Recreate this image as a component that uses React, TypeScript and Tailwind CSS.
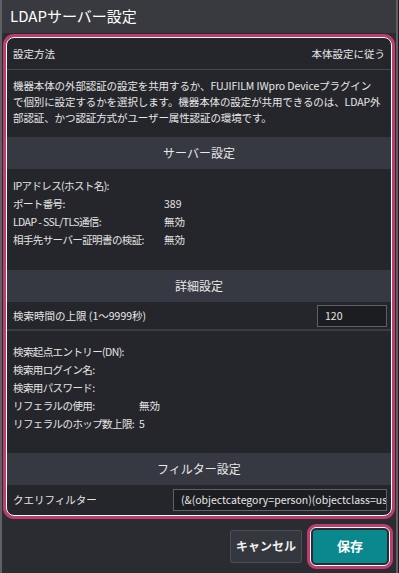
import React from "react";

const font = { fontFamily: '"Noto Sans CJK JP", "Noto Sans", sans-serif' };

function SectionHeader({ label }: { label: string }) {
  return (
    <div className="flex h-[32px] items-center justify-center bg-[#363941] text-[12px] text-[#e8e8e8]">
      {label}
    </div>
  );
}

function InfoRows({ rows, valueCol }: { rows: [string, string][]; valueCol: string }) {
  return (
    <div className="flex flex-col">
      {rows.map(([label, value]) => (
        <div key={label} className="flex h-[18px] items-center whitespace-nowrap text-[10.5px] text-[#e4e4e4]">
          <span className={`${valueCol} tracking-[-0.6px]`}>{label}</span>
          <span>{value}</span>
        </div>
      ))}
    </div>
  );
}

export default function App() {
  return (
    <div className="h-[573px] w-[399px] bg-[#1b1c1f]" style={font}>
      <div className="flex h-full w-[398px] flex-col border-x-2 border-[#5f6166] bg-[#2a2c31]">
        <div className="flex h-[33px] shrink-0 items-center bg-[#383a40] px-[8px] text-[15px] text-white">
          LDAPサーバー設定
        </div>

        <div className="mx-[1px] mt-[1px] rounded-[11px] border-[3px] border-[#c03c6e]">
          <div className="overflow-hidden rounded-[8px] border border-white bg-[#25262b]">
            <div className="flex h-[32px] items-center justify-between border-b border-[#43464d] px-[6px] text-[10.5px] text-[#e6e6e6]">
              <span>設定方法</span>
              <span>本体設定に従う</span>
            </div>

            <div className="whitespace-nowrap px-[6px] pb-[11px] pt-[8px] text-[10.5px] leading-[16px] tracking-[-0.1px] text-[#e6e6e6]">
              機器本体の外部認証の設定を共用するか、FUJIFILM IWpro Deviceプラグイン
              <br />
              で個別に設定するかを選択します。機器本体の設定が共用できるのは、LDAP外
              <br />
              部認証、かつ認証方式がユーザー属性認証の環境です。
            </div>

            <SectionHeader label="サーバー設定" />
            <div className="px-[6px] pb-[21px] pt-[8px]">
              <InfoRows
                valueCol="w-[151px]"
                rows={[
                  ["IPアドレス(ホスト名):", ""],
                  ["ポート番号:", "389"],
                  ["LDAP - SSL/TLS通信:", "無効"],
                  ["相手先サーバー証明書の検証:", "無効"],
                ]}
              />
            </div>

            <SectionHeader label="詳細設定" />
            <div className="flex h-[29px] items-center justify-between border-b-2 border-[#393c43] pl-[6px] pr-[4px] text-[10.5px] text-[#e6e6e6]">
              <span>検索時間の上限 (1～9999秒)</span>
              <div className="flex h-[22px] w-[70px] items-center border border-[#5d6068] bg-[#1c1d21] px-[7px]">
                120
              </div>
            </div>
            <div className="px-[6px] pb-[20px] pt-[12px]">
              <InfoRows
                valueCol="w-[126px]"
                rows={[
                  ["検索起点エントリー(DN):", ""],
                  ["検索用ログイン名:", ""],
                  ["検索用パスワード:", ""],
                  ["リフェラルの使用:", "無効"],
                  ["リフェラルのホップ数上限:", "5"],
                ]}
              />
            </div>

            <SectionHeader label="フィルター設定" />
            <div className="flex h-[30px] items-center justify-between pl-[6px] pr-[4px] text-[10.5px] text-[#e6e6e6]">
              <span>クエリフィルター</span>
              <div className="flex h-[22px] w-[214px] items-center overflow-hidden whitespace-nowrap border border-[#5d6068] bg-[#1c1d21] px-[7px]">
                (&amp;(objectcategory=person)(objectclass=us
              </div>
            </div>
          </div>
        </div>

        <div className="flex flex-1 items-center justify-end gap-[5px] pr-[3px]">
          <button className="h-[33px] w-[72px] rounded-[2px] border border-[#4b4e56] bg-[#34373d] text-[12px] font-bold text-[#eeeeee]">
            キャンセル
          </button>
          <div className="rounded-[9px] border-[3px] border-[#c03c6e]">
            <div className="rounded-[6px] border border-white p-[2px]">
              <button className="h-[33px] w-[74px] rounded-[3px] bg-[#0b888d] text-[13px] font-bold text-white">
                保存
              </button>
            </div>
          </div>
        </div>
      </div>
    </div>
  );
}
